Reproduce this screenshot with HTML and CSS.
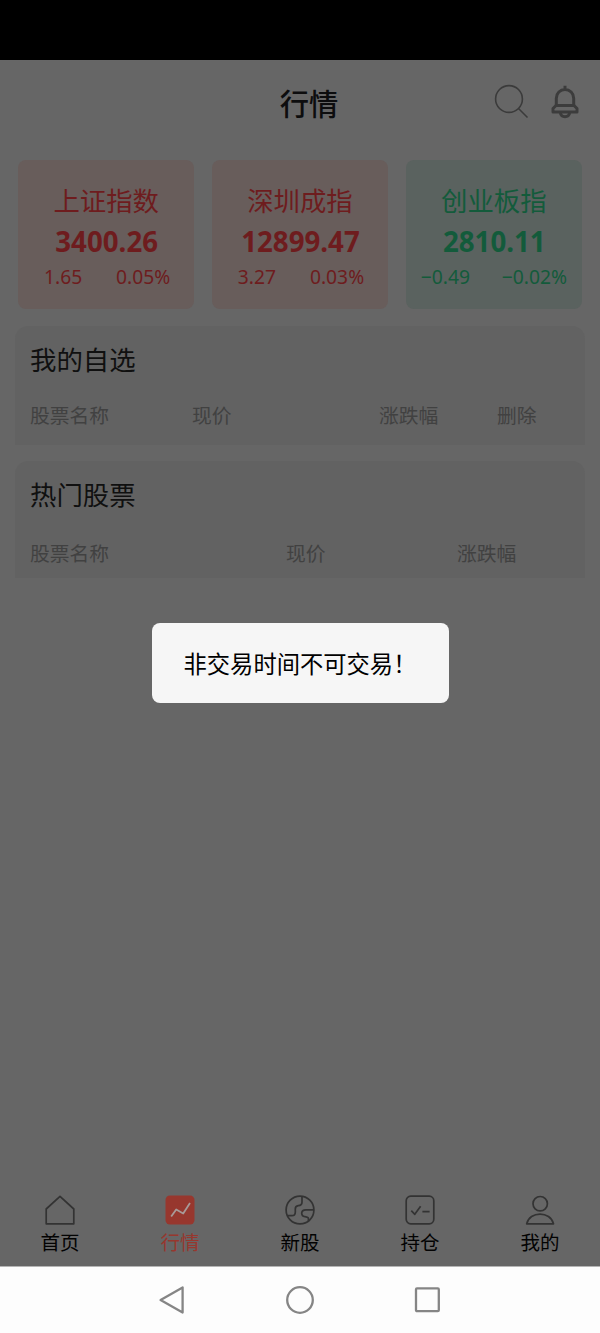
FILE: index.html
```html
<!DOCTYPE html>
<html lang="zh-CN">
<head>
<meta charset="utf-8">
<title>行情</title>
<link rel="stylesheet" href="styles.css">
</head>
<body>
<div class="screen">
  <div class="status"></div>
  <header class="header">
    <h1 class="title">行情</h1>
    <div class="actions">
      <svg class="search" width="36" height="36" viewBox="0 0 36 36"><circle cx="16" cy="16" r="13.4"/><path d="M25.5 25.5L34.5 34.5"/></svg>
      <svg class="bell" width="28" height="34" viewBox="0 0 28 34"><path d="M14 .8V4M5.3 20V13.2a8.7 8.7 0 0 1 17.4 0V20"/><path d="M5 20.5H23L26 23.5V27H2V23.5z"/><path d="M9.3 28c1.2 5 8.2 5 9.4 0"/></svg>
    </div>
  </header>
  <section class="indices">
    <article class="index up"><h2>上证指数</h2><strong>3400.26</strong><p><span>1.65</span><span>0.05%</span></p></article>
    <article class="index up"><h2>深圳成指</h2><strong>12899.47</strong><p><span>3.27</span><span>0.03%</span></p></article>
    <article class="index down"><h2>创业板指</h2><strong>2810.11</strong><p><span>−0.49</span><span>−0.02%</span></p></article>
  </section>
  <section class="panel favorites">
    <h2>我的自选</h2>
    <div class="cols"><span>股票名称</span><span>现价</span><span>涨跌幅</span><span>删除</span></div>
  </section>
  <section class="panel hot">
    <h2>热门股票</h2>
    <div class="cols"><span>股票名称</span><span>现价</span><span>涨跌幅</span></div>
  </section>
  <nav class="tabs">
    <div class="tab"><svg width="30" height="30" viewBox="0 0 30 30"><path d="M1.2 28.8V14L15 1.3 28.8 14v14.8z"/></svg><span>首页</span></div>
    <div class="tab active"><svg width="30" height="30" viewBox="0 0 30 30"><rect class="tile" x=".5" y=".5" width="29" height="29" rx="4.5"/><path class="trend" d="M6.2 21.5l5-7 7 4L25 8"/></svg><span>行情</span></div>
    <div class="tab"><svg width="30" height="30" viewBox="0 0 30 30"><circle cx="15" cy="15" r="13.9"/><path d="M2.2 20.7H7q3.3 0 3.3-3.4V14q0-3 3-3.4 3.7-.2 3.7-3.4V1.5M28.5 14.8H21q-4.3 0-4.3 3.5 0 3.3 4.3 3.5 3 .2 2.4 3.5v1.4"/></svg><span>新股</span></div>
    <div class="tab"><svg width="30" height="30" viewBox="0 0 30 30"><rect x="1.2" y="1.2" width="27.6" height="27.6" rx="4.5"/><path d="M6.3 15.7l3.5 3.6 5.8-8M17.4 16.7h7.2"/></svg><span>持仓</span></div>
    <div class="tab"><svg width="30" height="30" viewBox="0 0 30 30"><circle cx="15.2" cy="8.7" r="7.2"/><path d="M1.7 28.8C4.5 15.8 25.5 15.8 28.5 28.8z"/></svg><span>我的</span></div>
  </nav>
  <footer class="system">
    <svg width="27" height="30" viewBox="0 0 27 30"><path d="M23.6 2.4v25.2L1.6 15z"/></svg>
    <svg width="30" height="30" viewBox="0 0 30 30"><circle cx="15" cy="15" r="12.8"/></svg>
    <svg width="27" height="30" viewBox="0 0 27 30"><rect x="2" y="3.4" width="22.8" height="22.8" rx="1"/></svg>
  </footer>
  <div class="dialog" role="alertdialog">非交易时间不可交易！</div>
</div>
</body>
</html>
```

FILE: styles.css
```css
* { box-sizing: border-box; }
body { margin: 0; font-family: "Noto Sans", "Noto Sans CJK SC", sans-serif; background: #666; }
h1, h2, p { margin: 0; font-weight: 400; }
svg { display: block; fill: none; flex: none; stroke-linejoin: round; }
.screen { position: relative; width: 600px; height: 1333px; display: flex; flex-direction: column; background: #666; overflow: hidden; }
.status { height: 60px; background: #000; flex: none; }
.header { height: 100px; flex: none; display: grid; grid-template-columns: 1fr auto 1fr; padding: 23px 21.5px 0; align-items: start; }
.title { grid-column: 2; font-size: 29.3px; line-height: 40px; font-weight: 500; color: #0d0d0e; padding: 1px 0 0 18px; }
.actions { display: flex; justify-content: flex-end; gap: 21.5px; }
.search { stroke: #3b3b3b; stroke-width: 1.6; }
.bell { stroke: #3c3c3c; stroke-width: 3; margin-top: 1.5px; }
.indices { display: grid; grid-template-columns: repeat(3, 1fr); gap: 17.5px; padding: 0 18px; height: 149px; flex: none; }
.index { border-radius: 8px; padding-top: 21px; display: flex; flex-direction: column; align-items: center; }
.index h2 { font-size: 26.4px; line-height: 40px; }
.index strong { font-size: 27.7px; line-height: 40px; font-weight: 700; padding-left: 1px; }
.index p { align-self: stretch; display: flex; justify-content: space-between; font-size: 19.3px; line-height: 32px; padding: 0 24px 0 26px; }
.up { background: #685d5b; color: #6e1c1e; }
.down { background: #5a625f; color: #135b3b; }
.down p { padding: 0 15px; }
.panel { margin: 17px 15px 0; padding: 0 15px; border-radius: 13px 13px 0 0; background: #626262; height: 119px; flex: none; }
.panel h2 { font-size: 26.4px; line-height: 40px; color: #101010; padding-top: 14px; }
.cols { display: grid; font-size: 19.8px; line-height: 30px; color: #414141; padding-top: 21px; }
.favorites .cols { grid-template-columns: 162px 187px 118px 1fr; }
.hot { margin-top: 16px; height: 117px; }
.hot .cols { grid-template-columns: 256px 171px 1fr; padding-top: 24px; }
.tabs { margin-top: auto; height: 71px; flex: none; display: grid; grid-template-columns: repeat(5, 1fr); }
.tab { display: flex; flex-direction: column; align-items: center; font-size: 19.5px; line-height: 30px; color: #030303; }
.tab svg { stroke: #333; stroke-width: 1.7; }
.tab span { margin-top: 3px; }
.active { color: #97372e; }
.active .tile { fill: #97372e; stroke: none; }
.active .trend { stroke: #a89a98; stroke-width: 1.8; }
.system { height: 67px; flex: none; background: #fdfdfd; border-top: 1px solid #b5b5b5; display: flex; justify-content: center; gap: 99px; padding-top: 18px; }
.system svg { stroke: #858585; stroke-width: 2.3; }
.dialog { position: absolute; left: 151.5px; top: 623px; width: 297px; height: 80px; border-radius: 8px; background: #f6f6f6; color: #000; font-size: 23.3px; line-height: 83px; padding-left: 32px; white-space: nowrap; }
```
